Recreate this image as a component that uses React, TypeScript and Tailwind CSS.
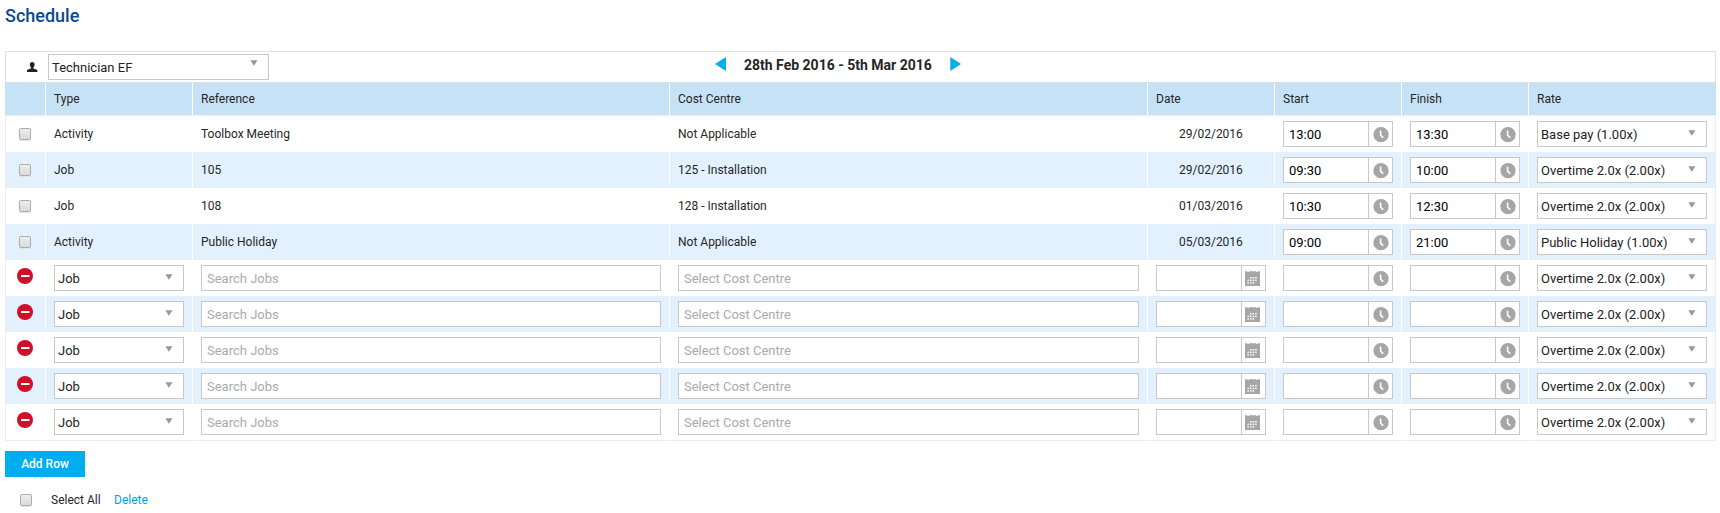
import React from "react";

type Row = { type: string; ref?: string; cost?: string; date?: string; start?: string; finish?: string; rate: string };

const OT = "Overtime 2.0x (2.00x)";
const rows: Row[] = [
  { type: "Activity", ref: "Toolbox Meeting", cost: "Not Applicable", date: "29/02/2016", start: "13:00", finish: "13:30", rate: "Base pay (1.00x)" },
  { type: "Job", ref: "105", cost: "125 - Installation", date: "29/02/2016", start: "09:30", finish: "10:00", rate: OT },
  { type: "Job", ref: "108", cost: "128 - Installation", date: "01/03/2016", start: "10:30", finish: "12:30", rate: OT },
  { type: "Activity", ref: "Public Holiday", cost: "Not Applicable", date: "05/03/2016", start: "09:00", finish: "21:00", rate: "Public Holiday (1.00x)" },
  ...Array.from({ length: 5 }, () => ({ type: "Job", rate: OT })),
];

const COLS = "grid grid-cols-[40px_146px_476px_477px_126px_126px_126px_187px] gap-x-px";

function Caret() {
  return (
    <svg width="8" height="6" viewBox="0 0 8 6" className="shrink-0">
      <path d="M0.3 0.3h7.2L3.9 5.8z" fill="#999" />
    </svg>
  );
}

function Select({ value, className = "", caret = "pt-[8px]" }: { value: string; className?: string; caret?: string }) {
  return (
    <div className={`flex h-[26px] justify-between border border-[#c8c8c8] bg-white pl-[3px] text-[13px] leading-[26px] text-[#222] ${className}`}>
      <span className="whitespace-nowrap">{value}</span>
      <span className={`flex pr-[10px] ${caret}`}><Caret /></span>
    </div>
  );
}

function SearchBox({ label }: { label: string }) {
  return (
    <div className="h-[26px] border border-[#c8c8c8] bg-white pl-[5px] text-[13px] leading-[26px] text-[#aaa]">{label}</div>
  );
}

function Clock() {
  return (
    <svg width="16" height="16" viewBox="0 0 16 16">
      <circle cx="8" cy="7.7" r="7.6" fill="#a6a6a6" />
      <path d="M7.6 3.4v4.7l2.7 2.7" fill="none" stroke="#fff" strokeWidth="1.6" />
    </svg>
  );
}

function Calendar() {
  const dots = [[6, 6], [8.6, 6], [11.2, 6], [3.4, 8.6], [6, 8.6], [8.6, 8.6], [11.2, 8.6], [3.4, 11.2], [6, 11.2], [8.6, 11.2]];
  return (
    <svg width="15" height="15" viewBox="0 0 15 15">
      <path d="M0 0.2h2.500v0.8h1.500v-0.8h7v0.8h1.500v-0.8H15V15H0z" fill="#a6a6a6" />
      {dots.map(([x, y]) => <rect key={`${x}-${y}`} x={x - 1} y={y} width="1.5" height="1.5" fill="#fff" />)}
    </svg>
  );
}

function Field({ value, icon }: { value?: string; icon: "clock" | "calendar" }) {
  return (
    <div className="flex h-[26px] w-[110px] border border-[#c8c8c8] bg-white text-[13px] leading-[26px] text-black">
      <div className="w-[84px] pl-[5px]">{value}</div>
      <div className={`flex flex-1 items-start border-l border-[#c8c8c8] pt-[5px] ${icon === "clock" ? "pl-[4px]" : "pl-[3px]"}`}>
        {icon === "clock" ? <Clock /> : <Calendar />}
      </div>
    </div>
  );
}

function Checkbox() {
  return <span className="block size-[12px] rounded-[2px] border border-[#adadad] bg-linear-to-b from-[#eee] to-[#dadada] shadow-[0_1px_1px_#e2e2e2]" />;
}

function Remove() {
  return (
    <svg width="16" height="16" viewBox="0 0 16 16">
      <circle cx="8" cy="8" r="8" fill="#ce1126" />
      <rect x="4" y="7" width="8.5" height="2" fill="#fff" />
    </svg>
  );
}

function TableRow({ row, odd }: { row: Row; odd: boolean }) {
  const fixed = row.ref !== undefined;
  const bg = odd ? "bg-[#e3f1ff]" : "bg-white";
  const text = `${bg} pl-[8px] leading-[36px]`;
  const box = `${bg} px-[8px] pt-[5px]`;
  return (
    <div className={`${COLS} h-[36px]`}>
      <div className={`${bg} border-l border-[#ececec] ${fixed ? "pt-[12px] pl-[13px]" : "pt-[8px] pl-[11px]"}`}>{fixed ? <Checkbox /> : <Remove />}</div>
      {fixed ? (
        <>
          <div className={text}>{row.type}</div>
          <div className={text}>{row.ref}</div>
          <div className={text}>{row.cost}</div>
          <div className={`${bg} pl-[31px] leading-[36px]`}>{row.date}</div>
        </>
      ) : (
        <>
          <div className={box}><Select value={row.type} /></div>
          <div className={box}><SearchBox label="Search Jobs" /></div>
          <div className={box}><SearchBox label="Select Cost Centre" /></div>
          <div className={box}><Field icon="calendar" /></div>
        </>
      )}
      <div className={box}><Field value={row.start} icon="clock" /></div>
      <div className={box}><Field value={row.finish} icon="clock" /></div>
      <div className={`${bg} border-r border-[#ececec] pt-[5px] pl-[8px]`}><Select value={row.rate} className="w-[170px]" /></div>
    </div>
  );
}

export default function App() {
  return (
    <div className="h-[513px] w-[1720px] overflow-hidden bg-white pl-[5px] font-['Roboto',sans-serif] text-[12px] text-[#262626]">
      <h1 className="h-[51px] pt-[4px] text-[18px] leading-[24px] font-medium text-[#0b4a8f]">Schedule</h1>
      <div className="w-[1711px]">
        <div className="flex h-[32px] border border-[#e0e0e0]">
          <div className="w-[42px] pt-[10px] pl-[21px]">
            <svg width="11" height="11" viewBox="0 0 11 11">
              <path d="M5.2 0C6.700 0 7.600 1 7.600 2.600c0 1.400-.6 2.400-1.200 3v1l3 1c.8.3 1 .8 1 1.600V10H0V9.200c0-.8.2-1.300 1-1.600l3-1v-1C3.400 5 2.800 4 2.800 2.600 2.800 1 3.700 0 5.200 0z" fill="#222" />
            </svg>
          </div>
          <Select value="Technician EF" caret="pt-[5px]" className="mt-[2px] w-[221px]" />
          <div className="ml-[446px] flex pt-[5px]">
            <svg width="11" height="14" viewBox="0 0 11 14"><path d="M11 0v14L0 7z" fill="#00adef" /></svg>
            <span className="ml-[18px] w-[188px] text-[14px] leading-[16px] font-bold whitespace-nowrap text-[#262626]">28th Feb 2016 - 5th Mar 2016</span>
            <svg width="11" height="14" viewBox="0 0 11 14" className="ml-[18px]"><path d="M0.300 0v14L11 7z" fill="#00adef" /></svg>
          </div>
        </div>
        <div className={`${COLS} h-[33px] border-b border-[#eee]`}>
          {["", "Type", "Reference", "Cost Centre", "Date", "Start", "Finish", "Rate"].map((h) => (
            <div key={h} className="bg-[#c6e2f7] pl-[8px] leading-[32px]">{h}</div>
          ))}
        </div>
        {rows.map((r, i) => <TableRow key={i} row={r} odd={i % 2 === 1} />)}
        <div className={`${COLS} h-px`}>
          {Array.from({ length: 8 }, (_, i) => <div key={i} className="bg-[#ececec]" />)}
        </div>
      </div>
      <button className="mt-[10px] block h-[26px] w-[80px] bg-[#00adef] text-[12px] leading-[26px] font-medium text-white">Add Row</button>
      <div className="flex h-[46px] pt-[13px] leading-[20px]">
        <div className="w-[46px] pt-[4px] pl-[15px]"><Checkbox /></div>
        <span className="w-[63px]">Select All</span>
        <a className="text-[#00a0e8]">Delete</a>
      </div>
    </div>
  );
}
